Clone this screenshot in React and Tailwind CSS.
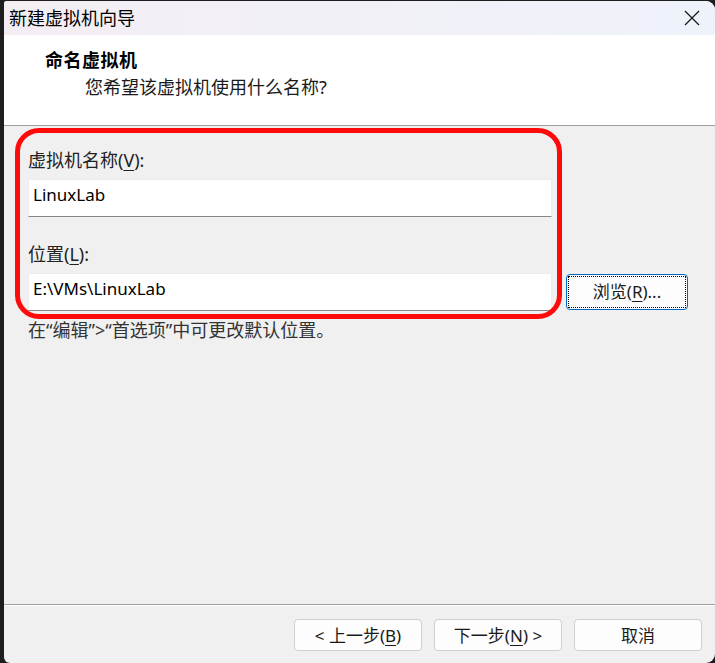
import React from 'react';

const font = "font-['Noto_Sans','Noto_Sans_CJK_SC',sans-serif]";

const Key = ({ children }) => <span className="underline underline-offset-[3px]">{children}</span>;

const WizardButton = ({ children }) => (
  <button className="w-[128px] h-[32px] rounded-[4px] border border-[#d0d0d0] bg-[#fdfdfd] text-[17px] text-[#1a1a1a] leading-none">
    {children}
  </button>
);

export default function App() {
  return (
    <div className={`w-[715px] h-[663px] bg-[#1e1e1e] pl-[4px] pt-[1px] flex ${font}`}>
      <div className="relative flex-1 flex flex-col bg-[#f0f0f0] rounded-tr-[9px] rounded-br-[9px] rounded-bl-[6px] rounded-tl-[3px] overflow-hidden">
        {/* Title bar */}
        <div className="h-[34px] flex items-center justify-between pl-[5px] pr-[15px] bg-gradient-to-r from-[#f4eef4] to-[#eef2fa]">
          <span className="text-[18px] text-black leading-none">新建虚拟机向导</span>
          <svg width="16" height="16" viewBox="0 0 16 16" className="text-[#1a1a1a]">
            <path d="M1 1 L15 15 M15 1 L1 15" stroke="currentColor" strokeWidth="1.3" fill="none" />
          </svg>
        </div>

        {/* Header */}
        <div className="h-[91px] bg-white border-b border-[#a0a0a0] pt-[13px]">
          <div className="pl-[41px] text-[18px] font-bold tracking-[0.5px] text-black leading-6">命名虚拟机</div>
          <div className="pl-[81px] mt-[3px] text-[18px] text-[#1a1a1a] leading-6">您希望该虚拟机使用什么名称?</div>
        </div>

        {/* Content */}
        <div className="pl-[24px] pt-[22px] text-[18px] text-[#222]">
          <div className="leading-6">虚拟机名称(<Key>V</Key>):</div>
          <div className="mt-[7px] w-[524px] h-[38px] bg-white border border-[#ececec] border-b-[#868686] flex items-center pl-[4px] pb-[7px] text-[17px] text-black">
            LinuxLab
          </div>

          <div className="mt-[25px] leading-6">位置(<Key>L</Key>):</div>
          <div className="mt-[7px] flex items-center gap-[14px]">
            <div className="w-[524px] h-[38px] bg-white border border-[#ececec] border-b-[#868686] flex items-center pl-[4px] pb-[7px] text-[17px] text-black">
              E:\VMs\LinuxLab
            </div>
            <button className="w-[122px] h-[36px] rounded-[4px] border border-[#0067c0] bg-[#fdfdfd] p-[1px]">
              <span className="w-full h-full flex items-center justify-center border border-dotted border-black text-[17px] text-[#1a1a1a]">
                浏览(<Key>R</Key>)...
              </span>
            </button>
          </div>

          <div className="mt-[7px] leading-6 text-[#333]">在“编辑”&gt;“首选项”中可更改默认位置。</div>
        </div>

        <div className="flex-1" />

        {/* Footer */}
        <div className="border-t border-[#a0a0a0] shadow-[inset_0_1px_0_#ffffff] pt-[14px] pb-[12px] pr-[13px] flex justify-end gap-[12px]">
          <WizardButton>&lt; 上一步(<Key>B</Key>)</WizardButton>
          <WizardButton>下一步(<Key>N</Key>) &gt;</WizardButton>
          <WizardButton>取消</WizardButton>
        </div>

        {/* Red annotation */}
        <div className="absolute left-[11px] top-[127px] w-[547px] h-[191px] border-[5px] border-[#ff0a0a] rounded-[24px] pointer-events-none" />
      </div>
    </div>
  );
}
